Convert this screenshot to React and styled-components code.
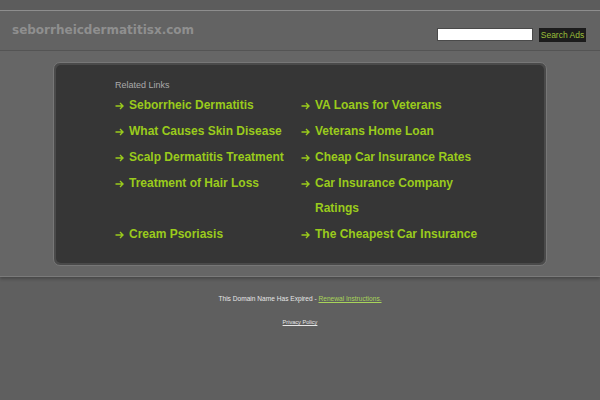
import React from 'react';
import styled, { createGlobalStyle } from 'styled-components';

const GlobalStyle = createGlobalStyle`
    html, body {
        margin: 0;
        padding: 0;
        background: #5f5f5f;
    }
    body {
        font-family: "Liberation Sans", Arial, sans-serif;
    }
`;

// listed row by row: left column, then right column
const links = [
    ['Seborrheic Dermatitis'],
    ['VA Loans for Veterans'],
    ['What Causes Skin Disease'],
    ['Veterans Home Loan'],
    ['Scalp Dermatitis Treatment'],
    ['Cheap Car Insurance Rates'],
    ['Treatment of Hair Loss'],
    ['Car Insurance Company', 'Ratings'],
    ['Cream Psoriasis'],
    ['The Cheapest Car Insurance'],
];

const ArrowIcon = () => (
    <svg width="9" height="8" viewBox="0 0 9 8">
        <path d="M0.5 4H8M5 1L8 4L5 7" fill="none" stroke="currentColor" strokeWidth="1.4" />
    </svg>
);

const App = () => {
    return (
        <Page>
            <GlobalStyle />
            <TopBand />
            <Header>
                <SiteName>seborrheicdermatitisx.com</SiteName>
                <SearchForm onSubmit={e => e.preventDefault()}>
                    <SearchInput type="text" />
                    <SearchButton type="submit">Search Ads</SearchButton>
                </SearchForm>
            </Header>
            <Content>
                <Panel>
                    <PanelInner>
                        <Heading>Related Links</Heading>
                        <LinkGrid>
                            {links.map(lines => (
                                <LinkItem key={lines[0]} href="#">
                                    <Arrow><ArrowIcon /></Arrow>
                                    <LinkText>{lines.map(l => <span key={l}>{l}</span>)}</LinkText>
                                </LinkItem>
                            ))}
                        </LinkGrid>
                    </PanelInner>
                </Panel>
            </Content>
            <Footer>
                <FooterLine>
                    This Domain Name Has Expired - <FooterLink $green href="#">Renewal Instructions.</FooterLink>
                </FooterLine>
                <FooterLine $small>
                    <FooterLink href="#">Privacy Policy</FooterLink>
                </FooterLine>
            </Footer>
        </Page>
    );
};

export default App;

const Page = styled.div`
    width: 600px;
    min-height: 400px;
    background: #5f5f5f;
`;

const TopBand = styled.div`
    height: 10px;
    background: #5c5c5c;
    border-bottom: 1px solid #8e8e8e;
`;

const Header = styled.div`
    height: 39px;
    background: #636363;
    border-bottom: 1px solid #555;
    display: flex;
    align-items: center;
    justify-content: space-between;
    padding: 0 14px 0 12px;
`;

const SiteName = styled.div`
    font-family: "DejaVu Sans", sans-serif;
    font-weight: bold;
    font-size: 12px;
    color: #8f8f8f;
    margin-top: -1px;
`;

const SearchForm = styled.form`
    display: flex;
    align-items: center;
    gap: 6px;
    margin: 8px 0 0;
`;

const SearchInput = styled.input`
    width: 94px;
    height: 11px;
    padding: 0;
    border: 1px solid #4a4a4a;
    background: #fff;
    box-sizing: content-box;
`;

const SearchButton = styled.button`
    width: 47px;
    height: 14px;
    padding: 0;
    border: none;
    background: #1c1c1c;
    color: #9bbf3a;
    font-family: "Liberation Sans", Arial, sans-serif;
    font-size: 8.5px;
    line-height: 14px;
    cursor: pointer;
`;

const Content = styled.div`
    background: #666;
    padding: 11px 53px 10px;
    border-bottom: 1px solid #7a7a7a;
    box-shadow: 0 2px 3px rgba(0, 0, 0, 0.25);
    position: relative;
`;

const Panel = styled.div`
    border: 1px solid #777;
    border-radius: 7px;
    background: #4a4a4a;
    padding: 2px;
`;

const PanelInner = styled.div`
    background: #363636;
    border-radius: 5px;
    padding: 15px 20px 16px 59px;
`;

const Heading = styled.div`
    font-size: 9px;
    color: #aaa;
    margin-bottom: 2px;
    line-height: 11px;
`;

const LinkGrid = styled.div`
    display: grid;
    grid-template-columns: 186px 1fr;
    row-gap: 1px;
`;

const LinkItem = styled.a`
    display: flex;
    align-items: flex-start;
    color: #9acb1c;
    font-weight: bold;
    font-size: 12px;
    line-height: 25px;
    text-decoration: none;
`;

const Arrow = styled.span`
    width: 14px;
    height: 25px;
    display: flex;
    align-items: center;
    flex-shrink: 0;
`;

const LinkText = styled.span`
    display: flex;
    flex-direction: column;
`;

const Footer = styled.div`
    padding-top: 17px;
    text-align: center;
`;

const FooterLine = styled.div`
    font-size: ${p => (p.$small ? '5.6px' : '6.6px')};
    color: #e6e6e6;
    line-height: 9px;
    margin-bottom: 15px;
`;

const FooterLink = styled.a`
    color: ${p => (p.$green ? '#a8d45a' : '#e6e6e6')};
    text-decoration: underline;
`;
